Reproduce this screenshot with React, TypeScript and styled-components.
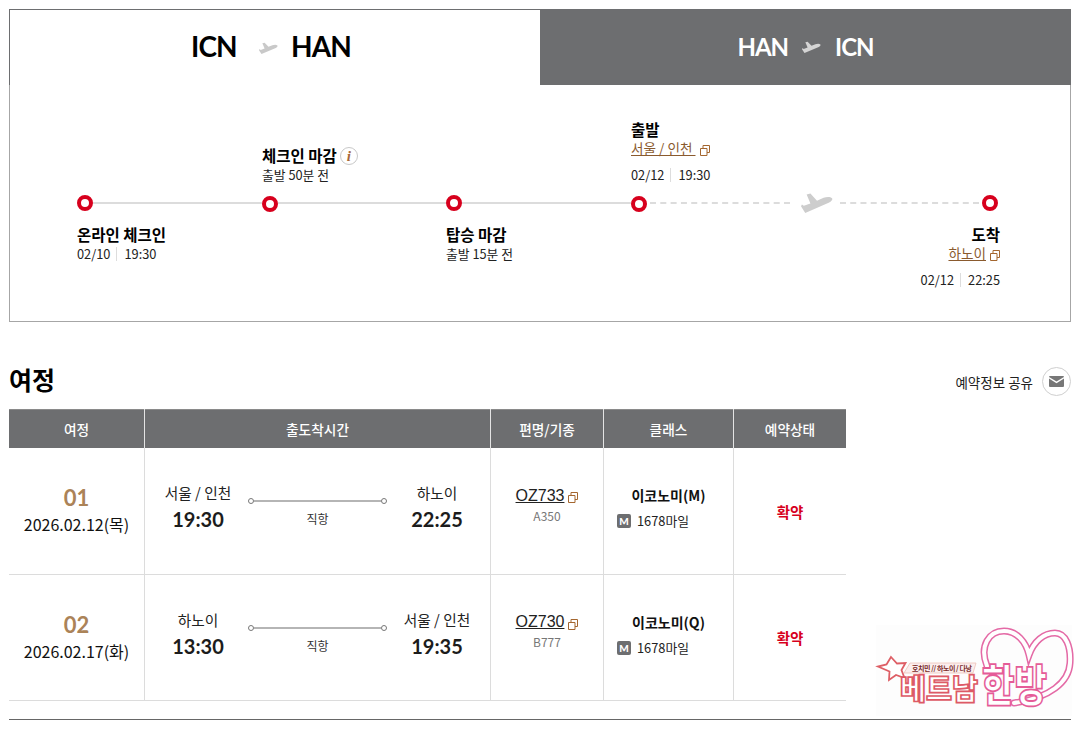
import React from "react";
import styled, { createGlobalStyle } from "styled-components";

const KR = `"Noto Sans CJK KR", "Noto Sans", sans-serif`;
const LAT = `Lato, "Noto Sans CJK KR", sans-serif`;

const Global = createGlobalStyle`
  html, body { margin: 0; padding: 0; background: #fff; }
  body { font-family: ${KR}; color: #111; overflow: hidden; }
`;

const Page = styled.div`
  position: relative;
  width: 1084px;
  height: 733px;
  box-sizing: border-box;
  padding: 9px 13px 0 9px;
`;

const Tabs = styled.div`
  display: flex;
  height: 76px;
`;
const Tab = styled.div<{ $active?: boolean }>`
  flex: none;
  width: 50%;
  box-sizing: border-box;
  display: flex;
  align-items: center;
  justify-content: center;
  font-family: ${LAT};
  font-weight: 700;
  font-size: ${(p) => (p.$active ? 28 : 24)}px;
  letter-spacing: ${(p) => (p.$active ? -0.8 : -1)}px;
  color: ${(p) => (p.$active ? "#000" : "#fff")};
  background: ${(p) => (p.$active ? "#fff" : "#6d6e70")};
  border-top: 1px solid #6d6e70;
  border-left: ${(p) => (p.$active ? "1px solid #6d6e70" : "none")};
  padding-bottom: 3px;
  padding-right: ${(p) => (p.$active ? 8 : 0)}px;
`;
const TabPlane = styled.svg<{ $active?: boolean }>`
  width: 19px;
  height: 13px;
  margin: ${(p) => (p.$active ? "5px 13px 0 22px" : "2px 14px 0 14px")};
  fill: ${(p) => (p.$active ? "#c9c9c9" : "#d4d4d4")};
`;

const Panel = styled.div`
  height: 237px;
  box-sizing: border-box;
  border: 1px solid #a6a6a6;
  border-top: none;
  padding-left: 67px;
  padding-right: 72px;
`;
const StopRow = styled.div<{ $top?: boolean }>`
  display: flex;
  align-items: ${(p) => (p.$top ? "flex-end" : "flex-start")};
  height: ${(p) => (p.$top ? 110 : 96)}px;
  ${(p) => (p.$top ? "padding-bottom: 10px;" : "padding-top: 13px;")}
  box-sizing: border-box;
`;
const Stop = styled.div<{ $end?: boolean; $second?: boolean }>`
  display: flex;
  flex-direction: column;
  width: ${(p) => (p.$end ? "auto" : p.$second ? "184px" : "185px")};
  ${(p) => (p.$end ? "margin-left: auto; margin-right: -2px; align-items: flex-end;" : "")}
`;
const StopTitle = styled.div`
  display: flex;
  align-items: center;
  gap: 3px;
  font-size: 15.5px;
  font-weight: 700;
  line-height: 20px;
  color: #000;
`;
const StopSub = styled.div`
  font-size: 12.8px;
  line-height: 20px;
  color: #222;
  display: flex;
  align-items: center;
`;
const Sep = styled.i`
  width: 1px;
  height: 14px;
  background: #ddd;
  margin: 0 7px 0 6px;
`;
const CityLink = styled.div`
  display: flex;
  align-items: center;
  gap: 4px;
  font-size: 13.6px;
  line-height: 18px;
  color: #8a5a2e;
  margin-bottom: 8px;
  & > span { text-decoration: underline; }
`;
const Copy = styled.svg`
  width: 10px;
  height: 11px;
  margin-top: 4px;
  flex: none;
  fill: none;
  stroke: #a4662f;
  stroke-width: 1;
`;
const Info = styled.span`
  width: 18px;
  height: 18px;
  box-sizing: border-box;
  border: 1px solid #c8c8c8;
  border-radius: 50%;
  display: inline-flex;
  align-items: center;
  justify-content: center;
  font: italic 700 15px "Liberation Serif", serif;
  color: #a8693a;
  margin-top: 2px;
`;
const Rail = styled.div`
  display: flex;
  align-items: center;
  height: 16px;
`;
const Dot = styled.span<{ $low?: boolean }>`
  width: 16px;
  height: 16px;
  box-sizing: border-box;
  flex: none;
  border: 4px solid #d7001d;
  border-radius: 50%;
  background: #fff;
  ${(p) => (p.$low ? "margin-top: 2px;" : "")}
`;
const Solid = styled.span<{ $short?: boolean }>`
  flex: none;
  width: ${(p) => (p.$short ? 168 : 169)}px;
  height: 2px;
  background: #dcdcdc;
`;
const Dash = styled.span`
  flex: 1;
  height: 0;
  border-top: 2px dashed #dcdcdc;
  margin: 0 3px;
`;
const BigPlane = styled.svg`
  width: 32px;
  height: 21px;
  fill: #cdcdcd;
  flex: none;
  margin: 0 4px 0 8px;
`;

const SectionHead = styled.div`
  display: flex;
  align-items: center;
  justify-content: space-between;
  margin-top: 45px;
  height: 29px;
  margin-bottom: 13px;
`;
const Heading = styled.h2`
  margin: -5px 0 0;
  font-size: 25px;
  font-weight: 700;
  line-height: 29px;
  color: #000;
`;
const Share = styled.div`
  display: flex;
  align-items: center;
  gap: 9px;
  font-size: 13.5px;
  color: #222;
`;
const MailBtn = styled.span`
  width: 29px;
  height: 29px;
  box-sizing: border-box;
  border: 1px solid #cfcfcf;
  border-radius: 50%;
  display: flex;
  align-items: center;
  justify-content: center;
`;

const Table = styled.table`
  width: 837px;
  table-layout: fixed;
  border-collapse: separate;
  border-spacing: 0;
  & tbody tr:first-child td { height: 127px; }
`;
const Th = styled.th`
  height: 39px;
  padding: 0;
  background: #6d6e70;
  color: #fff;
  font-size: 13.7px;
  font-weight: 500;
  border-left: 1px solid #e4e4e4;
  box-shadow: inset 0 1px 0 #8a8a8a;
  box-sizing: border-box;
  &:first-child { border-left: none; }
`;
const Td = styled.td`
  height: 126px;
  box-sizing: border-box;
  padding: 0;
  text-align: center;
  vertical-align: middle;
  border-left: 1px solid #dcdcdc;
  border-bottom: 1px solid #dcdcdc;
  &:first-child { border-left: none; }
`;
const Seq = styled.div`
  font-family: ${LAT};
  font-weight: 700;
  font-size: 22px;
  line-height: 28px;
  margin-top: -2px;
  color: #ab8358;
`;
const DateText = styled.div`
  font-size: 16px;
  line-height: 24px;
  color: #111;
`;
const Route = styled.div`
  display: grid;
  grid-template-columns: 96px 139px 96px;
  gap: 2px;
  padding-left: 5px;
  margin-top: -4px;
`;
const End = styled.div`
  display: flex;
  flex-direction: column;
  align-items: center;
`;
const City = styled.div`
  font-size: 14.7px;
  line-height: 20px;
  color: #222;
`;
const Time = styled.div`
  font-family: ${LAT};
  font-weight: 700;
  font-size: 20px;
  line-height: 32px;
  color: #1c1c1c;
`;
const Path = styled.div`
  display: flex;
  flex-direction: column;
  align-items: center;
  padding-top: 15px;
`;
const PathLine = styled.div`
  display: flex;
  align-items: center;
  width: 100%;
`;
const Knob = styled.span`
  width: 6px;
  height: 6px;
  flex: none;
  box-sizing: border-box;
  border: 1px solid #777;
  border-radius: 50%;
`;
const Bar = styled.span`
  flex: 1;
  height: 2px;
  background: #b5b5b5;
`;
const Direct = styled.div`
  font-size: 12px;
  line-height: 16px;
  margin-top: 7px;
  color: #333;
`;
const Flight = styled.div`
  display: flex;
  align-items: center;
  justify-content: center;
  gap: 4px;
  font-family: "Liberation Sans", sans-serif;
  font-size: 16px;
  line-height: 22px;
  color: #222;
  & > span { text-decoration: underline; }
`;
const Craft = styled.div`
  font-size: 12px;
  line-height: 18px;
  color: #777;
`;
const FlightBox = styled.div`
  margin-top: -13px;
`;
const ClassName = styled.div`
  font-size: 14px;
  font-weight: 700;
  line-height: 22px;
  color: #111;
`;
const Mile = styled.div`
  display: flex;
  align-items: center;
  gap: 6px;
  padding-left: 13px;
  margin-top: 6px;
  font-size: 12.8px;
  line-height: 18px;
  color: #222;
`;
const MBadge = styled.span`
  width: 14px;
  height: 14px;
  border-radius: 2px;
  background: #6d6e70;
  color: #fff;
  font: 900 10px/14px ${LAT};
  text-align: center;
`;
const ClassBox = styled.div`
  margin-top: -8px;
`;
const Status = styled.div`
  font-size: 14.5px;
  font-weight: 700;
  color: #d7001d;
`;
const Rule = styled.div`
  position: absolute;
  left: 9px;
  top: 719px;
  width: 1062px;
  height: 1px;
  background: #666;
`;
const Logo = styled.svg`
  position: absolute;
  left: 874px;
  top: 622px;
  width: 200px;
  height: 96px;
`;

const CopyIcon = () => (
  <Copy viewBox="0 0 10 11">
    <path d="M.5 3.500h6.500v7H.5z" />
    <path d="M3 3.500V.5h6.500v7H7" />
  </Copy>
);
const planePath =
  "M33 5.500C31 3.500 27 4 24 5L17 8 10 .5 6 1.500 10 11 3 13.500 1 12 0 14 4.500 21 30 10C32 9 34 7 33 5.500z";
const PlaneSmall = ({ active }: { active?: boolean }) => (
  <TabPlane $active={active} viewBox="0 0 34 22">
    <path d={planePath} />
  </TabPlane>
);

const heart =
  "M113 44C105 24 115 9 130 9C143 9 152 20 155 33C160 19 170 11 181 11C192 11 197 25 196 41C195 60 176 76 140 81";

const rows = [
  { n: "01", d: "2026.02.12(목)", a: "서울 / 인천", at: "19:30", b: "하노이", bt: "22:25", f: "OZ733", c: "A350", k: "이코노미(M)" },
  { n: "02", d: "2026.02.17(화)", a: "하노이", at: "13:30", b: "서울 / 인천", bt: "19:35", f: "OZ730", c: "B777", k: "이코노미(Q)" },
];

export default function App() {
  return (
    <Page>
      <Global />
      <Tabs>
        <Tab $active>
          <span>ICN</span>
          <PlaneSmall active />
          <span>HAN</span>
        </Tab>
        <Tab>
          <span>HAN</span>
          <PlaneSmall />
          <span>ICN</span>
        </Tab>
      </Tabs>
      <Panel>
        <StopRow $top>
          <Stop />
          <Stop $second>
            <StopTitle>
              체크인 마감 <Info>i</Info>
            </StopTitle>
            <StopSub>출발 50분 전</StopSub>
          </Stop>
          <Stop />
          <Stop>
            <StopTitle>출발</StopTitle>
            <CityLink>
              <span>서울 / 인천&nbsp;</span>
              <CopyIcon />
            </CityLink>
            <StopSub>
              02/12<Sep />19:30
            </StopSub>
          </Stop>
        </StopRow>
        <Rail>
          <Dot />
          <Solid />
          <Dot $low />
          <Solid $short />
          <Dot />
          <Solid />
          <Dot $low />
          <Dash />
          <BigPlane viewBox="0 0 34 22">
            <path d={planePath} />
          </BigPlane>
          <Dash />
          <Dot />
        </Rail>
        <StopRow>
          <Stop>
            <StopTitle>온라인 체크인</StopTitle>
            <StopSub>
              02/10<Sep />19:30
            </StopSub>
          </Stop>
          <Stop $second />
          <Stop>
            <StopTitle>탑승 마감</StopTitle>
            <StopSub>출발 15분 전</StopSub>
          </Stop>
          <Stop $end>
            <StopTitle>도착</StopTitle>
            <CityLink>
              <span>하노이</span>
              <CopyIcon />
            </CityLink>
            <StopSub>
              02/12<Sep />22:25
            </StopSub>
          </Stop>
        </StopRow>
      </Panel>
      <SectionHead>
        <Heading>여정</Heading>
        <Share>
          예약정보 공유
          <MailBtn>
            <svg width="15" height="11" viewBox="0 0 15 11">
              <path fill="#777" d="M1 0h13a1 1 0 0 1 1 1L7.500 5.600 0 1a1 1 0 0 1 1-1z" />
              <path fill="#777" d="M0 2.600l7.500 4.600L15 2.600V10a1 1 0 0 1-1 1H1a1 1 0 0 1-1-1z" />
            </svg>
          </MailBtn>
        </Share>
      </SectionHead>
      <Table>
        <colgroup>
          <col width={135} />
          <col width={346} />
          <col width={113} />
          <col width={130} />
          <col width={113} />
        </colgroup>
        <thead>
          <tr>
            <Th>여정</Th>
            <Th>출도착시간</Th>
            <Th>편명/기종</Th>
            <Th>클래스</Th>
            <Th>예약상태</Th>
          </tr>
        </thead>
        <tbody>
          {rows.map((r) => (
            <tr key={r.n}>
              <Td>
                <Seq>{r.n}</Seq>
                <DateText>{r.d}</DateText>
              </Td>
              <Td>
                <Route>
                  <End>
                    <City>{r.a}</City>
                    <Time>{r.at}</Time>
                  </End>
                  <Path>
                    <PathLine>
                      <Knob />
                      <Bar />
                      <Knob />
                    </PathLine>
                    <Direct>직항</Direct>
                  </Path>
                  <End>
                    <City>{r.b}</City>
                    <Time>{r.bt}</Time>
                  </End>
                </Route>
              </Td>
              <Td>
                <FlightBox>
                  <Flight>
                    <span>{r.f}</span>
                    <CopyIcon />
                  </Flight>
                  <Craft>{r.c}</Craft>
                </FlightBox>
              </Td>
              <Td>
                <ClassBox>
                  <ClassName>{r.k}</ClassName>
                  <Mile>
                    <MBadge>M</MBadge>
                    1678마일
                  </Mile>
                </ClassBox>
              </Td>
              <Td>
                <Status>확약</Status>
              </Td>
            </tr>
          ))}
        </tbody>
      </Table>
      <Rule />
      <Logo viewBox="0 0 200 96">
        <rect x="2" y="3" width="196" height="91" fill="#fdfdfd" />
        <path d={heart} fill="none" stroke="#e46aa6" strokeWidth="7" strokeLinecap="round" />
        <path d={heart} fill="none" stroke="#fff" strokeWidth="4" strokeLinecap="round" />
        <path
          d="M17 35l6 6.500 8.500-.5-4 7 3 8-8.500-3-7 5 .5-8.500L4 44.500l8.500-2z"
          fill="#fff"
          stroke="#de5f66"
          strokeWidth="1.800"
        />
        <path d="M36 41h66l-3 10H30z" fill="#fbeeee" stroke="#eec2b8" strokeWidth=".8" />
        <text x="38" y="49" fontFamily={KR} fontSize="7" fontWeight="700" fill="#7a2b2b" textLength="60">
          호치민 // 하노이 / 다낭
        </text>
        <text x="26" y="78" fontFamily={KR} fontSize="29" fontWeight="900" fill="#fff" stroke="#dd5a66" strokeWidth="1.700" textLength="78" lengthAdjust="spacingAndGlyphs">
          베트남
        </text>
        <text x="108" y="80" fontFamily={KR} fontSize="44" fontWeight="900" fill="#fff" stroke="#e55c98" strokeWidth="1.800" textLength="65" lengthAdjust="spacingAndGlyphs">
          한방
        </text>
      </Logo>
    </Page>
  );
}
